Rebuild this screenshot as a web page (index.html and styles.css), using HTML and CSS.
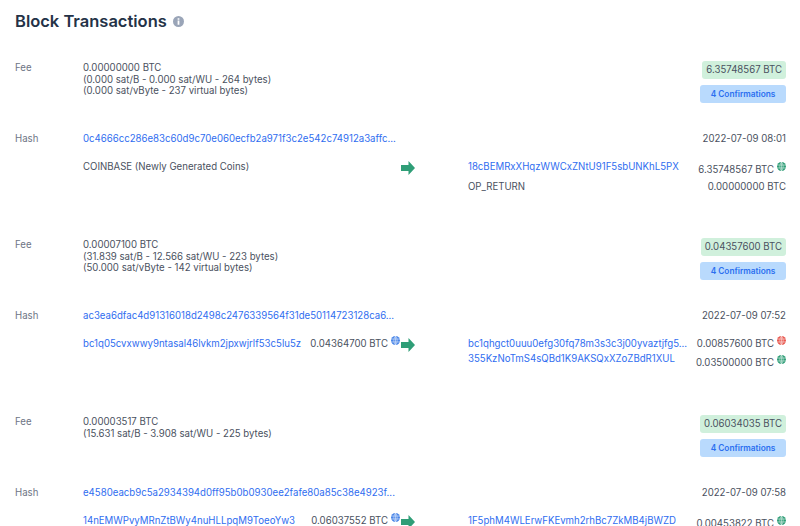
FILE: index.html
```html
<!DOCTYPE html>
<html lang="en">
<head>
<meta charset="utf-8">
<title>Block Transactions</title>
<link rel="stylesheet" href="styles.css">
</head>
<body>
<svg class="defs" width="0" height="0" aria-hidden="true">
  <symbol id="globe" viewBox="0 0 10 10">
    <circle cx="5" cy="5" r="5" fill="currentColor"/>
    <path d="M0 3.4H10M0 6.6H10M5 0V10M5 0C2.6 2.8 2.6 7.2 5 10M5 0C7.4 2.8 7.4 7.2 5 10" fill="none" stroke="#fff" stroke-width=".7" opacity=".75"/>
  </symbol>
  <symbol id="arrow" viewBox="0 0 14 14">
    <path d="M0 4H7.5V0L14 7L7.5 14V10H0Z" fill="currentColor"/>
  </symbol>
</svg>
<main class="page">
  <h1 class="title">Block Transactions
    <svg class="info" viewBox="0 0 10 10" aria-hidden="true"><circle cx="5" cy="5" r="5" fill="#9aa5b8"/><path d="M4.2 2.1H5.8V3.4H4.2ZM4.2 4.2H5.8V7.9H4.2Z" fill="#fff"/></svg>
  </h1>

  <section class="tx">
    <div class="fee-row">
      <div class="label">Fee</div>
      <div class="fee-text">0.00000000 BTC<br>(0.000 sat/B - 0.000 sat/WU - 264 bytes)<br>(0.000 sat/vByte - 237 virtual bytes)</div>
      <div class="badges"><span class="total">6.35748567 BTC</span><span class="confirm">4 Confirmations</span></div>
    </div>
    <div class="hash-row">
      <div class="label">Hash</div>
      <a class="link hash" href="#">0c4666cc286e83c60d9c70e060ecfb2a971f3c2e542c74912a3affc...</a>
      <div class="time">2022-07-09 08:01</div>
    </div>
    <div class="io-row">
      <div class="inputs">COINBASE (Newly Generated Coins)</div>
      <svg class="arrow"><use href="#arrow"/></svg>
      <div class="outputs">
        <div class="out out-tall"><a class="link" href="#">18cBEMRxXHqzWWCxZNtU91F5sbUNKhL5PX</a><span class="amt amt-low">6.35748567 BTC<svg class="globe green"><use href="#globe"/></svg></span></div>
        <div class="out"><span>OP_RETURN</span><span class="amt">0.00000000 BTC</span></div>
      </div>
    </div>
  </section>

  <section class="tx">
    <div class="fee-row">
      <div class="label">Fee</div>
      <div class="fee-text">0.00007100 BTC<br>(31.839 sat/B - 12.566 sat/WU - 223 bytes)<br>(50.000 sat/vByte - 142 virtual bytes)</div>
      <div class="badges"><span class="total">0.04357600 BTC</span><span class="confirm">4 Confirmations</span></div>
    </div>
    <div class="hash-row">
      <div class="label">Hash</div>
      <a class="link hash" href="#">ac3ea6dfac4d91316018d2498c2476339564f31de50114723128ca6...</a>
      <div class="time">2022-07-09 07:52</div>
    </div>
    <div class="io-row">
      <div class="inputs input-line"><a class="link" href="#">bc1q05cvxwwy9ntasal46lvkm2jpxwjrlf53c5lu5z</a><span class="amt">0.04364700 BTC<svg class="globe blue"><use href="#globe"/></svg></span></div>
      <svg class="arrow"><use href="#arrow"/></svg>
      <div class="outputs">
        <div class="out out-first"><a class="link" href="#">bc1qhgct0uuu0efg30fq78m3s3c3j00yvaztjfg5...</a><span class="amt">0.00857600 BTC<svg class="globe red"><use href="#globe"/></svg></span></div>
        <div class="out out-second"><a class="link" href="#">355KzNoTmS4sQBd1K9AKSQxXZoZBdR1XUL</a><span class="amt amt-lower">0.03500000 BTC<svg class="globe green"><use href="#globe"/></svg></span></div>
      </div>
    </div>
  </section>

  <section class="tx">
    <div class="fee-row">
      <div class="label">Fee</div>
      <div class="fee-text">0.00003517 BTC<br>(15.631 sat/B - 3.908 sat/WU - 225 bytes)</div>
      <div class="badges"><span class="total">0.06034035 BTC</span><span class="confirm">4 Confirmations</span></div>
    </div>
    <div class="hash-row">
      <div class="label">Hash</div>
      <a class="link hash" href="#">e4580eacb9c5a2934394d0ff95b0b0930ee2fafe80a85c38e4923f...</a>
      <div class="time">2022-07-09 07:58</div>
    </div>
    <div class="io-row">
      <div class="inputs input-line"><a class="link" href="#">14nEMWPvyMRnZtBWy4nuHLLpqM9ToeoYw3</a><span class="amt">0.06037552 BTC<svg class="globe blue"><use href="#globe"/></svg></span></div>
      <svg class="arrow"><use href="#arrow"/></svg>
      <div class="outputs">
        <div class="out out-first"><a class="link" href="#">1F5phM4WLErwFKEvmh2rhBc7ZkMB4jBWZD</a><span class="amt amt-low">0.00453822 BTC<svg class="globe green"><use href="#globe"/></svg></span></div>
      </div>
    </div>
  </section>
</main>
</body>
</html>
```
FILE: styles.css
```css
html, body {
  margin: 0;
  height: 526px;
  overflow: hidden;
  background: #fff;
}
.defs { position: absolute; }
.page {
  height: 515px;
  overflow: hidden;
  padding: 11px 14px 0 15px;
  font: 400 9.65px/11.7px Inter, "Liberation Sans", sans-serif;
  color: #4a5160;
}
.title {
  display: flex;
  align-items: center;
  gap: 6px;
  margin: 0 0 20px;
  height: 21px;
  font-size: 16.5px;
  line-height: 21px;
  font-weight: 600;
  color: #243247;
}
.info { width: 11px; height: 11px; }
.tx { height: 177px; }
.fee-row { display: flex; height: 81px; padding-top: 10px; box-sizing: border-box; }
.label { width: 68px; flex: none; color: #6d7585; }
.fee-text { flex: 1; }
.badges {
  display: flex;
  flex-direction: column;
  align-items: flex-end;
  gap: 6px;
  margin-top: -1px;
}
.total {
  padding: 3px 4px;
  height: 12px;
  line-height: 12px;
  background: #d0f0dc;
  border-radius: 3px;
}
.confirm {
  width: 74px;
  padding: 3px 6px;
  height: 12px;
  line-height: 12px;
  text-align: center;
  font-size: 8.3px;
  font-weight: 600;
  color: #2b6ff0;
  background: #b9dafd;
  border-radius: 3px;
}
.hash-row { display: flex; height: 28px; }
.hash { flex: 1; }
.link { color: #2f6df0; text-decoration: none; }
.io-row { display: flex; padding-left: 68px; }
.inputs { width: 317px; flex: none; }
.input-line { display: flex; justify-content: space-between; }
.arrow { width: 14px; height: 14px; flex: none; margin: 0 0 0 1px; color: #2f9e77; }
.outputs { flex: 1; padding-left: 53px; }
.out { display: flex; justify-content: space-between; height: 20px; }
.out-first { height: 15px; }
.out-second { height: 20px; }
.amt { display: inline-flex; align-items: flex-start; white-space: nowrap; }
.amt-low { padding-top: 3px; }
.amt-lower { padding-top: 4px; }
.globe { width: 9px; height: 9px; margin-left: 3px; margin-top: -2px; }
.green { color: #2f9e77; }
.blue { color: #4a86e8; }
.red { color: #e8584f; }
```
